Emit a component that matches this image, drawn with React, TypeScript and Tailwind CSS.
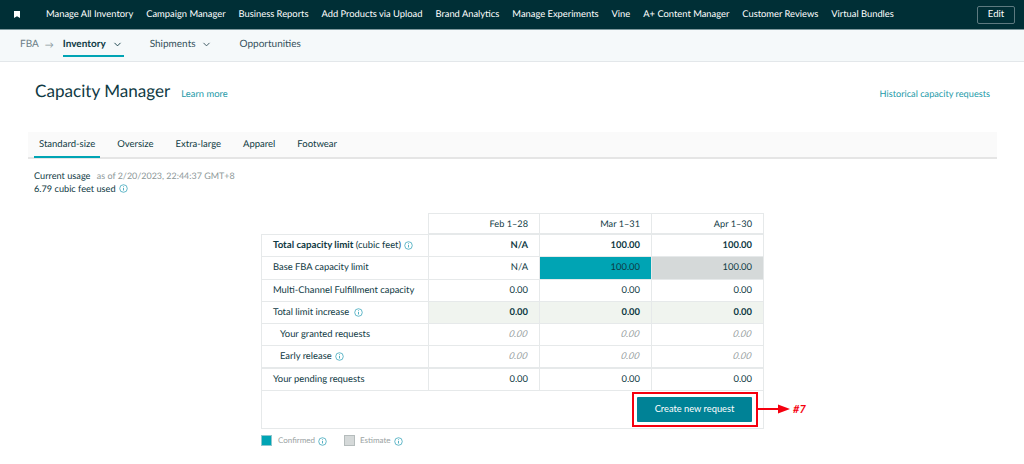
import { ChevronDown } from 'lucide-react';

const topLinks = [
  'Manage All Inventory',
  'Campaign Manager',
  'Business Reports',
  'Add Products via Upload',
  'Brand Analytics',
  'Manage Experiments',
  'Vine',
  'A+ Content Manager',
  'Customer Reviews',
  'Virtual Bundles',
];

const tabs = ['Standard-size', 'Oversize', 'Extra-large', 'Apparel', 'Footwear'];

type Row = {
  label: string;
  suffix?: string;
  info?: boolean;
  indent?: boolean;
  kind?: 'bold' | 'base' | 'increase' | 'muted';
  values: string[];
};

const rows: Row[] = [
  { label: 'Total capacity limit', suffix: ' (cubic feet)', info: true, kind: 'bold', values: ['N/A', '100.00', '100.00'] },
  { label: 'Base FBA capacity limit', kind: 'base', values: ['N/A', '100.00', '100.00'] },
  { label: 'Multi-Channel Fulfillment capacity', values: ['0.00', '0.00', '0.00'] },
  { label: 'Total limit increase', info: true, kind: 'increase', values: ['0.00', '0.00', '0.00'] },
  { label: 'Your granted requests', indent: true, kind: 'muted', values: ['0.00', '0.00', '0.00'] },
  { label: 'Early release', info: true, indent: true, kind: 'muted', values: ['0.00', '0.00', '0.00'] },
  { label: 'Your pending requests', values: ['0.00', '0.00', '0.00'] },
];

function InfoIcon() {
  return (
    <svg width="9" height="9" viewBox="0 0 10 10" className="inline-block shrink-0 text-[#2a9fb5]" fill="none" stroke="currentColor">
      <circle cx="5" cy="5" r="4.2" strokeWidth="0.8" />
      <path d="M5 4.4v2.8M5 2.6v0.9" strokeWidth="0.9" />
    </svg>
  );
}

function cellClass(row: Row, col: number) {
  if (row.kind === 'base' && col === 1) return 'bg-[#00a4b4]';
  if (row.kind === 'base' && col === 2) return 'bg-[#d5d9d9]';
  if (row.kind === 'increase') return 'bg-[#f0f4ef] font-bold';
  if (row.kind === 'bold') return 'font-bold';
  if (row.kind === 'muted') return 'text-[#9aa3a3]';
  return '';
}

export default function App() {
  return (
    <div className="w-[1024px] h-[464px] overflow-hidden bg-white text-[#0f3a44] font-['Lato','Noto_Sans',sans-serif] text-[9.4px] [text-rendering:geometricPrecision]">
      {/* Top bar */}
      <header className="h-[30px] bg-[#002f36] border-b border-[#7f9a9e] flex items-center pl-[14px] pr-[9px] text-white">
        <svg width="6" height="7" viewBox="0 0 6 7" fill="white" className="shrink-0">
          <path d="M0 0h6v7L3 5.2 0 7z" />
        </svg>
        <nav className="flex gap-[13px] ml-[26px] text-[9.35px]">
          {topLinks.map((l) => (
            <span key={l} className="whitespace-nowrap">{l}</span>
          ))}
        </nav>
        <button className="ml-auto w-[38px] h-[18px] border border-[#5d7a80] rounded-[2px] text-[9.5px]">Edit</button>
      </header>

      {/* Sub nav */}
      <div className="h-[32px] bg-[#f5f9fa] border-b border-[#e3e7ea] flex items-center pl-[20px] pb-[2px] text-[10px] text-[#33505a]">
        <span className="text-[#6d8088]">FBA</span>
        <span className="text-[#8a9a9f] ml-[6px] text-[9px]">→</span>
        <div className="relative flex items-center ml-[9px] font-bold text-[#0f3a44]">
          Inventory
          <ChevronDown size={11} strokeWidth={2} className="ml-[6px]" />
          <div className="absolute left-0 -right-[1px] top-[18px] h-[2px] bg-[#00a4b4]" />
        </div>
        <div className="flex items-center ml-[27px]">
          Shipments
          <ChevronDown size={11} strokeWidth={2} className="ml-[5px]" />
        </div>
        <span className="ml-[28px]">Opportunities</span>
      </div>

      <main>
        {/* Title */}
        <div className="flex items-baseline px-[35px] pr-[34px] pt-[17px]">
          <h1 className="text-[17.1px] leading-[24px] text-[#0f3a44]">Capacity Manager</h1>
          <a className="ml-[11px] text-[#1d9aa8] text-[9.4px]">Learn more</a>
          <a className="ml-auto text-[#1d9aa8] text-[9.2px]">Historical capacity requests</a>
        </div>

        {/* Tabs */}
        <div className="ml-[28px] mr-[27px] mt-[29px] h-[27px] bg-[#fafafa] border-b-2 border-[#e5e5e5] flex pl-[6px] text-[9.5px]">
          {tabs.map((t, i) => (
            <div key={t} className={`h-[26px] leading-[25px] px-[5px] mr-[12px] ${i === 0 ? 'border-b-2 border-[#00a4b4]' : ''}`}>
              {t}
            </div>
          ))}
        </div>

        {/* Usage */}
        <div className="ml-[34px] mt-[11px] leading-[12.5px] text-[9.2px]">
          <div>
            Current usage <span className="text-[#8d9899] ml-[4px] text-[8.95px]">as of 2/20/2023, 22:44:37 GMT+8</span>
          </div>
          <div className="flex items-center gap-[3px]">
            6.79 cubic feet used <InfoIcon />
          </div>
        </div>

        {/* Table */}
        <div className="ml-[261px] mt-[18px] w-[503px]">
          <div className="grid grid-cols-[167px_112px_112px_112px] h-[22px] text-right text-[9.2px]">
            <div className="border-b border-[#e6e9ea]" />
            {['Feb 1–28', 'Mar 1–31', 'Apr 1–30'].map((h, i) => (
              <div key={h} className={`border-t border-r border-b-2 border-[#e6e9ea] pr-[11px] leading-[19px] ${i === 0 ? 'border-l' : ''}`}>
                {h}
              </div>
            ))}
          </div>
          <div className="border-l border-[#e6e9ea]">
            {rows.map((row) => (
              <div
                key={row.label}
                className={`grid grid-cols-[166px_112px_112px_112px] h-[22.3px] border-b border-[#e6e9ea] leading-[21px] ${row.label === 'Early release' ? 'border-b-2' : ''}`}
              >
                <div className={`flex items-center whitespace-nowrap ${row.kind === 'increase' ? 'gap-[5px]' : 'gap-[3px]'} ${row.indent ? 'pl-[18px]' : 'pl-[11px]'}`}>
                  <span>
                    <span className={row.kind === 'bold' ? 'font-bold text-[9.7px]' : ''}>{row.label}</span>
                    {row.suffix}
                  </span>
                  {row.info && <InfoIcon />}
                </div>
                {row.values.map((v, col) => (
                  <div key={col} className={`text-right pr-[11px] border-r border-[#e6e9ea] ${col === 0 ? 'border-l' : ''} ${cellClass(row, col)}`}>
                    {row.kind === 'muted' ? <span className="inline-block italic -skew-x-12">{v}</span> : v}
                  </div>
                ))}
              </div>
            ))}
            <div className="relative h-[38px] border-b border-r border-[#e6e9ea] flex items-center justify-end pr-[11px] pb-[1px]">
              <button className="w-[115px] h-[25px] bg-[#008296] rounded-[1px] text-white text-[9.3px]">Create new request</button>
              {/* Annotation */}
              <div className="absolute left-[370px] top-[1px] w-[126px] h-[35px] border-2 border-[#f5000f]" />
              <svg width="38" height="14" viewBox="0 0 38 14" className="absolute left-[495px] top-[11px]">
                <path d="M0 7h22" stroke="#f5000f" strokeWidth="2" />
                <path d="M21 2.5L33 7L21 11.5z" fill="#f5000f" />
              </svg>
              <span className="absolute left-[531px] top-[12px] text-[#f5000f] italic font-bold text-[11px] leading-[14px]">#7</span>
            </div>
          </div>

          {/* Legend */}
          <div className="flex items-center mt-[5px] text-[8px] text-[#9aa3a3]">
            <span className="w-[11px] h-[11px] bg-[#00a4b4] border border-[#8fc7ce]" />
            <span className="ml-[6px]">Confirmed</span>
            <span className="ml-[3px]"><InfoIcon /></span>
            <span className="ml-[17px] w-[11px] h-[11px] bg-[#d5d9d9] border border-[#b5bcbc]" />
            <span className="ml-[5px]">Estimate</span>
            <span className="ml-[3px]"><InfoIcon /></span>
          </div>
        </div>
      </main>
    </div>
  );
}
